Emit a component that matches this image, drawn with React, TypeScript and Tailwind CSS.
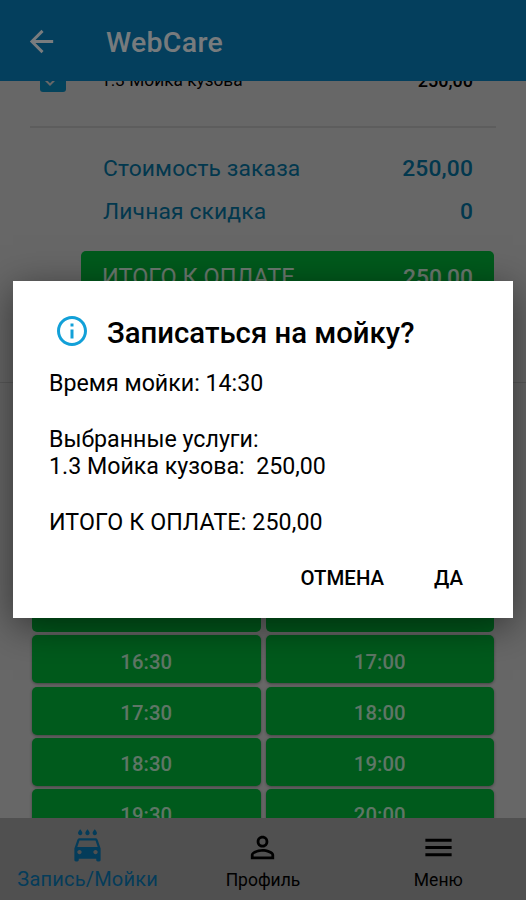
import React from "react"
import {
	MdArrowBack,
	MdCheck,
	MdInfoOutline,
	MdLocalCarWash,
	MdMenu,
	MdPersonOutline,
} from "react-icons/md"

const slots = [
	"16:30",
	"17:00",
	"17:30",
	"18:00",
	"18:30",
	"19:00",
	"19:30",
	"20:00",
]

function Header() {
	return (
		<header className="flex h-[81px] shrink-0 items-center bg-[#087eba] pl-[24px] pt-[2px] text-white/95">
			<MdArrowBack size={35} />
			<h1 className="ml-[47px] pt-[4px] text-[28.5px] font-medium leading-none tracking-[0.3px]">
				WebCare
			</h1>
		</header>
	)
}

function OrderSummary() {
	return (
		<section className="h-[302px] shrink-0 border-b border-[#b4b4b4]">
			<div className="-mt-[15px] flex h-[26px] items-center pl-[40px] pr-[53px] text-[18px] font-medium text-black">
				<div className="flex size-[26px] items-center justify-center rounded-[3px] bg-[#0886b8] text-[#cecece]">
					<MdCheck size={24} />
				</div>
				<span className="ml-[35px] pt-[3px] text-[17.3px] font-normal">
					1.3 Мойка кузова
				</span>
				<span className="ml-auto pt-[2px]">250,00</span>
			</div>
			<div className="mx-[30px] mt-[34px] h-[2px] bg-[#bababa]" />
			<div className="mt-[19px] pl-[103px] pr-[53px] text-[22.8px] leading-[43px] tracking-[0.15px] text-[#04709c]">
				<div className="flex justify-between">
					<span>Стоимость заказа</span>
					<span className="font-medium">250,00</span>
				</div>
				<div className="flex justify-between">
					<span>Личная скидка</span>
					<span className="font-medium">0</span>
				</div>
			</div>
			<div className="ml-[81px] mr-[32px] mt-[17.5px] flex h-[54px] items-center justify-between rounded-[5px] bg-[#00b438] px-[21px] pt-[1px] text-[23.5px] text-white/85">
				<span>ИТОГО К ОПЛАТЕ</span>
				<span className="text-[22.8px] font-medium">250,00</span>
			</div>
		</section>
	)
}

function SlotGrid() {
	return (
		<section className="mx-[32px] mt-[201px] grid grid-cols-2 gap-x-[5px] gap-y-[3.3px]">
			{/* row that slides under the dialog edge */}
			<div className="h-[48px] rounded-[5px] bg-[#00b438]" />
			<div className="h-[48px] rounded-[5px] bg-[#00b438]" />
			{slots.map((slot) => (
				<button
					key={slot}
					className="h-[48px] rounded-[5px] bg-[#00b438] pt-[5px] text-[20.3px] font-medium tracking-[0.1px] text-white/75 shadow-[0_1px_3px_rgba(0,0,0,0.35)]"
				>
					{slot}
				</button>
			))}
		</section>
	)
}

function BottomNav() {
	return (
		<nav className="grid h-[82px] shrink-0 grid-cols-3 bg-[#a0a0a0] text-black">
			<div className="flex flex-col items-center pt-[10px] text-[#0878b4]">
				<MdLocalCarWash size={35} />
				<span className="mt-[4px] text-[20px] leading-[24px] tracking-[0.2px]">
					Запись/Мойки
				</span>
			</div>
			<div className="flex flex-col items-center pt-[12px]">
				<MdPersonOutline size={35} />
				<span className="mt-[3px] text-[17.5px] leading-[24px]">Профиль</span>
			</div>
			<div className="flex flex-col items-center pt-[12px]">
				<MdMenu size={35} />
				<span className="mt-[3px] text-[17.5px] leading-[24px]">Меню</span>
			</div>
		</nav>
	)
}

function ConfirmDialog() {
	return (
		<div className="absolute inset-0 bg-black/50 pl-[13px] pt-[281px]">
			<div className="h-[337px] w-[500px] bg-white px-[36px] pt-[32px] text-black shadow-[0_8px_36px_rgba(0,0,0,0.5)]">
				<div className="flex h-[36px] items-center pl-[5px]">
					<MdInfoOutline size={36} className="text-[#12a0d8]" />
					<h2 className="ml-[17px] whitespace-nowrap pt-[5px] text-[29.3px] font-medium leading-none">
						Записаться на мойку?
					</h2>
				</div>
				<div className="mt-[21px] whitespace-pre text-[23.2px] leading-[27.8px]">
					<p>Время мойки: 14:30</p>
					<p className="mt-[27.8px]">Выбранные услуги:</p>
					<p>1.3 Мойка кузова:  250,00</p>
					<p className="mt-[27.8px] tracking-[0.12px]">
						ИТОГО К ОПЛАТЕ: 250,00
					</p>
				</div>
				<div className="mt-[29px] flex justify-end gap-[50px] pr-[14px] text-[20.4px] font-medium leading-[24px]">
					<button>ОТМЕНА</button>
					<button>ДА</button>
				</div>
			</div>
		</div>
	)
}

function App() {
	return (
		<div className="relative flex h-[900px] w-[526px] flex-col overflow-hidden bg-[#cecece] font-['Roboto',sans-serif]">
			<Header />
			<main className="flex min-h-0 flex-1 flex-col overflow-hidden">
				<OrderSummary />
				<SlotGrid />
			</main>
			<BottomNav />
			<ConfirmDialog />
		</div>
	)
}

export default App
